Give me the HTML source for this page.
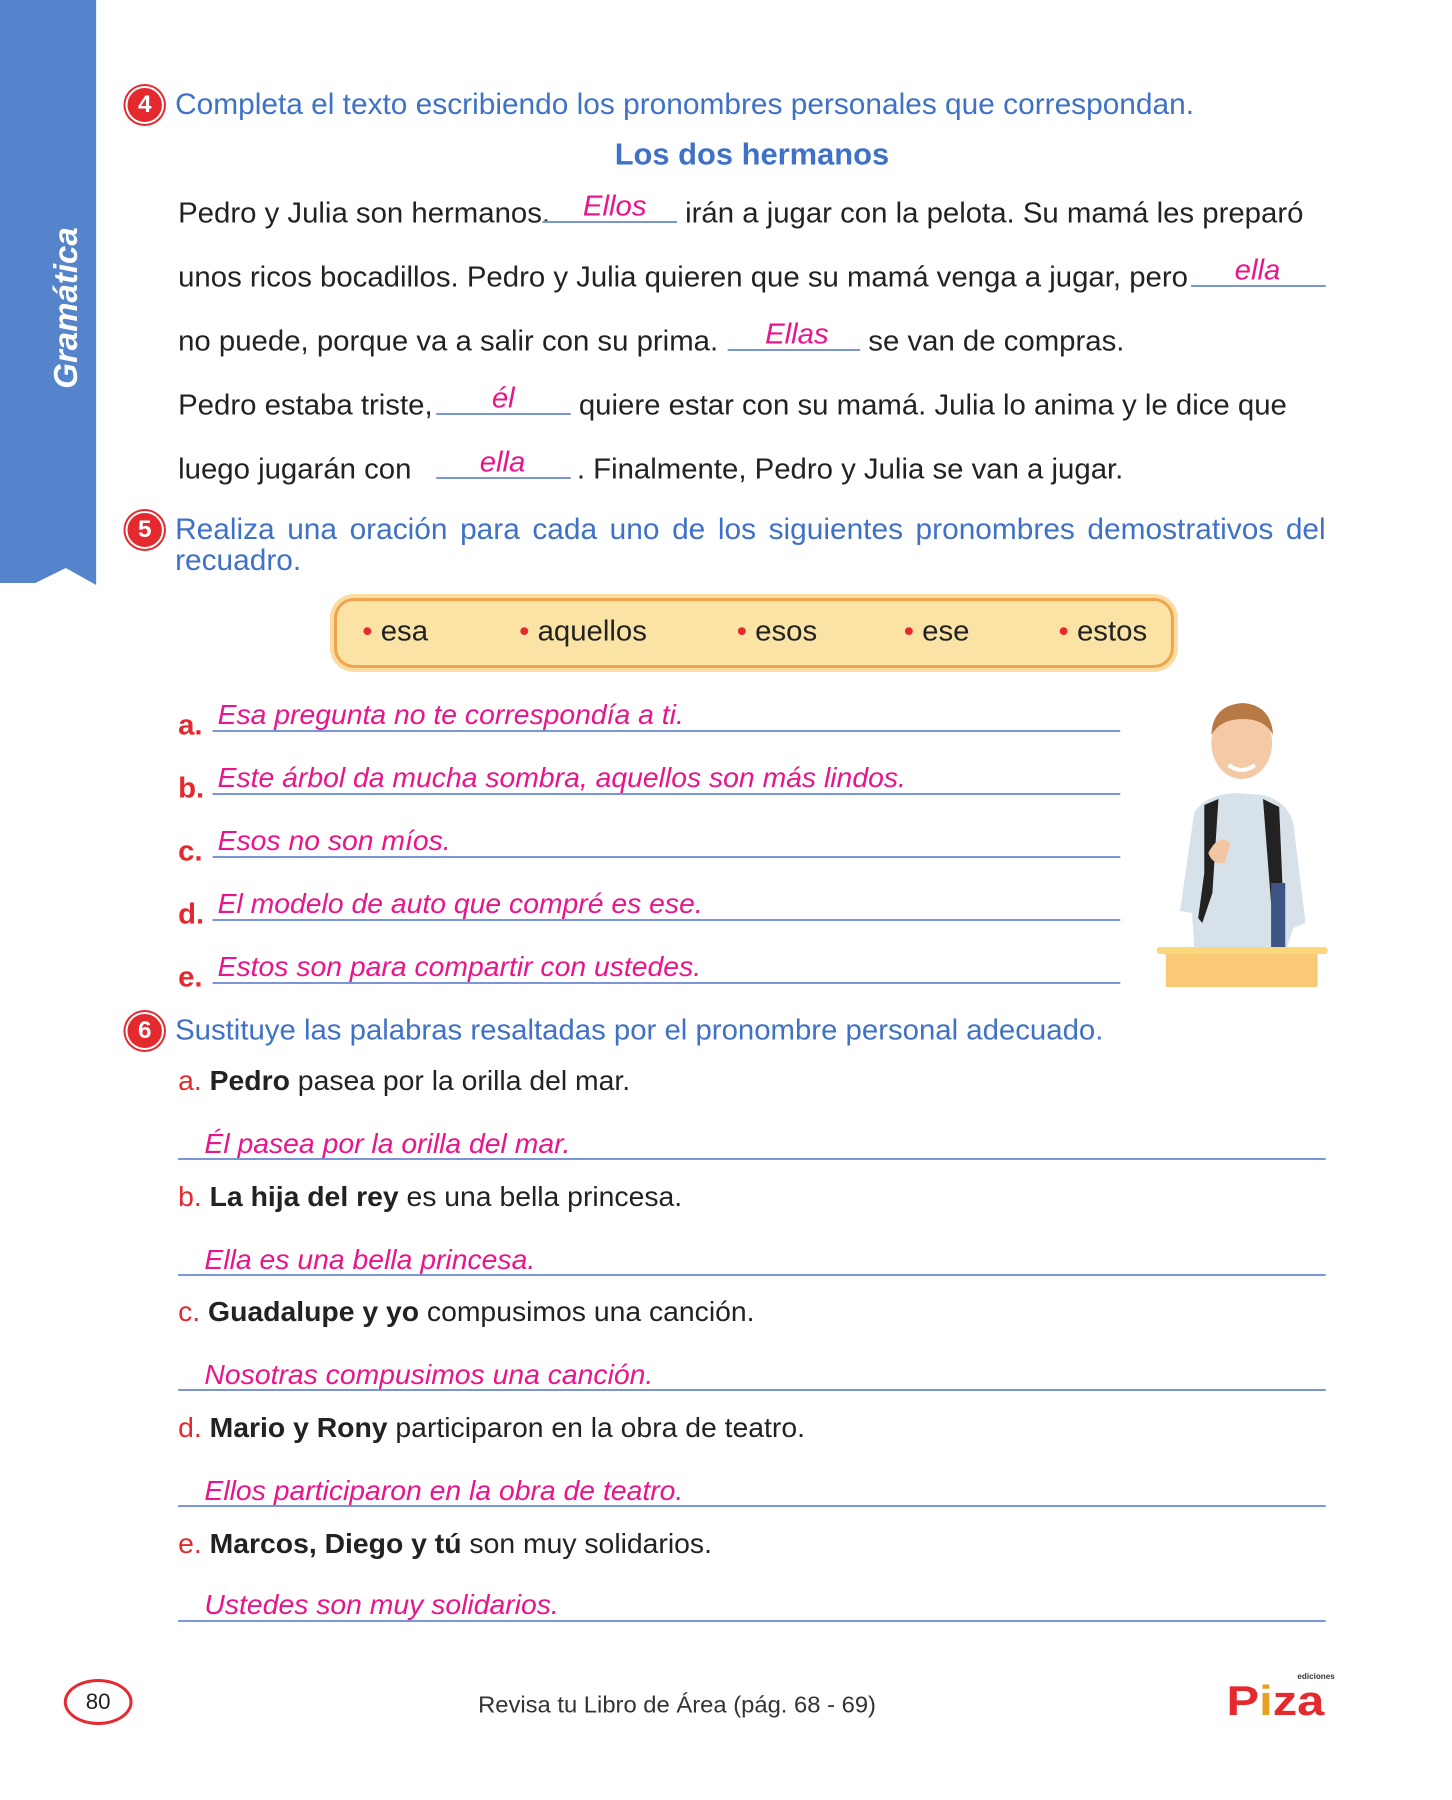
<!DOCTYPE html>
<html><head><meta charset="utf-8"><style>
*{margin:0;padding:0;box-sizing:border-box}
body{width:1452px;height:1800px;background:#fff;position:relative;overflow:hidden;font-family:"Liberation Sans",sans-serif;color:#222}
#w{position:absolute;left:0;top:0;width:1452px;height:1800px;transform:scale(1.012,1);transform-origin:0 0}
.a{position:absolute;white-space:nowrap}
.blue{color:#3f72c6}
.pk{color:#e8168a;font-style:italic}
.num{position:absolute;width:38px;height:38px;border-radius:50%;background:#e42a2f;border:2px solid #fff;box-shadow:0 0 0 2px #e42a2f;color:#fff;font-weight:bold;font-size:24px;text-align:center;line-height:34px}
.bl{position:absolute;height:2px;background:#7b96d8}
.t{font-size:29px;transform:translateY(-50%)}
.s{font-size:28px}
.lt{color:#e42a2f;font-weight:bold}
.top{position:absolute;left:0;top:-4px;width:1452px;height:1000px}
</style></head><body><div id="w">
<svg class="a" style="left:0;top:0" width="100" height="600"><path d="M0 0H95V585L65 568L35 583H0Z" fill="#5584cd"/></svg>
<div class="a" style="left:65px;top:308px;transform:translate(-50%,-50%) rotate(-90deg);color:#fff;font-weight:bold;font-style:italic;font-size:33px">Gramática</div>

<div class="top">
<div class="num" style="left:124px;top:90px">4</div>
<div class="a t blue" style="left:173px;top:109px;font-size:29.5px">Completa el texto escribiendo los pronombres personales que correspondan.</div>
<div class="a blue" style="left:743px;top:159px;transform:translate(-50%,-50%);font-weight:bold;font-size:30.5px">Los dos hermanos</div>

<div class="a t" style="left:176px;top:218px">Pedro y Julia son hermanos.</div>
<div class="bl" style="left:536px;top:225px;width:133px"></div><div class="a t pk" style="left:576px;top:211px">Ellos</div>
<div class="a t" style="left:677px;top:218px">irán a jugar con la pelota. Su mamá les preparó</div>

<div class="a t" style="left:176px;top:282px">unos ricos bocadillos. Pedro y Julia quieren que su mamá venga a jugar, pero</div>
<div class="bl" style="left:1177px;top:289px;width:133px"></div><div class="a t pk" style="left:1220px;top:275px">ella</div>

<div class="a t" style="left:176px;top:346px">no puede, porque va a salir con su prima.</div>
<div class="bl" style="left:719px;top:353px;width:131px"></div><div class="a t pk" style="left:756px;top:339px">Ellas</div>
<div class="a t" style="left:858px;top:346px">se van de compras.</div>

<div class="a t" style="left:176px;top:410px">Pedro estaba triste,</div>
<div class="bl" style="left:431px;top:417px;width:133px"></div><div class="a t pk" style="left:486px;top:403px">él</div>
<div class="a t" style="left:572px;top:410px">quiere estar con su mamá. Julia lo anima y le dice que</div>

<div class="a t" style="left:176px;top:474px">luego jugarán con</div>
<div class="bl" style="left:431px;top:481px;width:133px"></div><div class="a t pk" style="left:474px;top:467px">ella</div>
<div class="a t" style="left:570px;top:474px">. Finalmente, Pedro y Julia se van a jugar.</div>
</div>

<div class="top" style="top:-1px">
<div class="num" style="left:124px;top:512px">5</div>
<div class="a t blue" style="left:173px;top:531px;width:1137px;display:flex;justify-content:space-between;font-size:29.5px"><span>Realiza</span><span>una</span><span>oración</span><span>para</span><span>cada</span><span>uno</span><span>de</span><span>los</span><span>siguientes</span><span>pronombres</span><span>demostrativos</span><span>del</span></div>
<div class="a t blue" style="left:173px;top:562px;font-size:29.5px">recuadro.</div>

<div class="a" style="left:330px;top:599px;width:830px;height:70px;border-radius:20px;background:#fbe3a6;border:3px solid #f1a450;box-shadow:0 0 0 4px #fcdca0"></div>
<div class="a t" style="left:358px;top:633px"><span style="color:#e42a2f">•</span> esa</div>
<div class="a t" style="left:513px;top:633px"><span style="color:#e42a2f">•</span> aquellos</div>
<div class="a t" style="left:728px;top:633px"><span style="color:#e42a2f">•</span> esos</div>
<div class="a t" style="left:893px;top:633px"><span style="color:#e42a2f">•</span> ese</div>
<div class="a t" style="left:1046px;top:633px"><span style="color:#e42a2f">•</span> estos</div>

<div class="a t lt" style="left:176px;top:727px">a.</div><div class="a t pk s" style="left:215px;top:716px">Esa pregunta no te correspondía a ti.</div><div class="bl" style="left:210px;top:731px;width:897px"></div>
<div class="a t lt" style="left:176px;top:790px">b.</div><div class="a t pk s" style="left:215px;top:779px">Este árbol da mucha sombra, aquellos son más lindos.</div><div class="bl" style="left:210px;top:794px;width:897px"></div>
<div class="a t lt" style="left:176px;top:853px">c.</div><div class="a t pk s" style="left:215px;top:842px">Esos no son míos.</div><div class="bl" style="left:210px;top:857px;width:897px"></div>
<div class="a t lt" style="left:176px;top:916px">d.</div><div class="a t pk s" style="left:215px;top:905px">El modelo de auto que compré es ese.</div><div class="bl" style="left:210px;top:920px;width:897px"></div>
<div class="a t lt" style="left:176px;top:979px">e.</div><div class="a t pk s" style="left:215px;top:968px">Estos son para compartir con ustedes.</div><div class="bl" style="left:210px;top:983px;width:897px"></div>

<svg class="a" style="left:1140px;top:684px" width="180" height="310">
<path d="M40 130 Q50 112 80 110 L108 112 Q132 118 138 140 L150 240 L138 245 L132 264 H40 L38 230 L26 228 Z" fill="#d7e1ea"/>
<path d="M50 122 L64 116 L58 210 L48 240 L44 235 L50 190 Z" fill="#222"/>
<path d="M108 116 L124 124 L128 220 L116 220 Z" fill="#222"/>
<rect x="116" y="200" width="14" height="82" fill="#3e5485"/>
<path d="M54 170 Q64 150 76 160 L70 180 Q58 182 54 170Z" fill="#f2c6a2"/>
<ellipse cx="87" cy="60" rx="30" ry="36" fill="#f3c9a6"/>
<path d="M57 52 Q58 22 88 20 Q116 22 118 52 Q110 36 88 36 Q66 36 57 52Z" fill="#b77a45"/>
<path d="M74 82 Q87 92 100 82" stroke="#fff" stroke-width="4" fill="none"/>
<rect x="3" y="264" width="169" height="7" rx="3" fill="#fbd77c"/>
<rect x="12" y="271" width="150" height="33" fill="#f9c976"/>
</svg>
</div>

<div class="num" style="left:124px;top:1012px">6</div>
<div class="a t blue" style="left:173px;top:1031px;font-size:29px">Sustituye las palabras resaltadas por el pronombre personal adecuado.</div>

<div class="a t s" style="left:176px;top:1081px"><span class="lt" style="font-weight:normal">a.</span> <b>Pedro</b> pasea por la orilla del mar.</div>
<div class="a t pk s" style="left:202px;top:1144px">Él pasea por la orilla del mar.</div><div class="bl" style="left:176px;top:1158px;width:1134px"></div>
<div class="a t s" style="left:176px;top:1197px"><span class="lt" style="font-weight:normal">b.</span> <b>La hija del rey</b> es una bella princesa.</div>
<div class="a t pk s" style="left:202px;top:1260px">Ella es una bella princesa.</div><div class="bl" style="left:176px;top:1274px;width:1134px"></div>
<div class="a t s" style="left:176px;top:1312px"><span class="lt" style="font-weight:normal">c.</span> <b>Guadalupe y yo</b> compusimos una canción.</div>
<div class="a t pk s" style="left:202px;top:1375px">Nosotras compusimos una canción.</div><div class="bl" style="left:176px;top:1389px;width:1134px"></div>
<div class="a t s" style="left:176px;top:1428px"><span class="lt" style="font-weight:normal">d.</span> <b>Mario y Rony</b> participaron en la obra de teatro.</div>
<div class="a t pk s" style="left:202px;top:1491px">Ellos participaron en la obra de teatro.</div><div class="bl" style="left:176px;top:1505px;width:1134px"></div>
<div class="a t s" style="left:176px;top:1544px"><span class="lt" style="font-weight:normal">e.</span> <b>Marcos, Diego y tú</b> son muy solidarios.</div>
<div class="a t pk s" style="left:202px;top:1605px">Ustedes son muy solidarios.</div><div class="bl" style="left:176px;top:1620px;width:1134px"></div>

<div class="a" style="left:63px;top:1679px;width:68px;height:46px;border:3px solid #e42a2f;border-radius:50%;text-align:center;line-height:40px;font-size:22px">80</div>
<div class="a" style="left:669px;top:1705px;transform:translate(-50%,-50%);font-size:23.5px;color:#333">Revisa tu Libro de Área (pág. 68 - 69)</div>
<div class="a" style="left:1282px;top:1672px;font-size:8px;font-weight:bold;color:#333">ediciones</div>
<div class="a" style="left:1212px;top:1681px;font-size:42px;font-weight:bold;color:#e42a2f;line-height:40px;transform:scaleX(1.15);transform-origin:0 0">P<span style="color:#e8a020">i</span>za</div>
</div></body></html>
